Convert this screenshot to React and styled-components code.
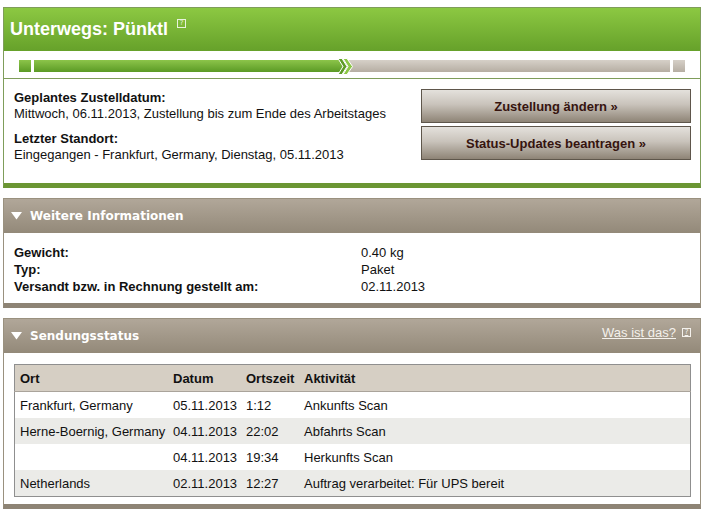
import React from "react";
import styled, { createGlobalStyle } from "styled-components";

const Global = createGlobalStyle`
  html, body { margin: 0; padding: 0; background: #fff; }
  body { font-family: "Liberation Sans", Arial, sans-serif; font-size: 13px; color: #111; }
`;

const Page = styled.div`
  width: 698px;
  padding: 7px 0 0 3px;
  display: flex;
  flex-direction: column;
  gap: 10px;
`;

const Panel = styled.section`
  border: 1px solid ${(p) => (p.$green ? "#7f9d5a" : "#9a917f")};
  border-bottom: 5px solid ${(p) => (p.$green ? "#6b9633" : "#8e8475")};
  background: #fff;
`;

const GreenHeader = styled.header`
  height: 43px;
  display: flex;
  align-items: center;
  padding-left: 6px;
  background: linear-gradient(#8cc842, #66a12a);
  color: #fff;
  font-weight: bold;
  font-size: 18px;
  gap: 9px;
`;

const HelpIcon = styled.span`
  display: inline-flex;
  align-items: center;
  justify-content: center;
  width: 7px;
  height: 7px;
  border: 1px solid ${(p) => p.$color || "#e8f2dc"};
  color: ${(p) => p.$color || "#e8f2dc"};
  font-size: 7px;
  line-height: 7px;
  font-weight: normal;
  font-family: "DejaVu Sans", sans-serif;
  align-self: ${(p) => (p.$top ? "flex-start" : "center")};
  margin-top: ${(p) => (p.$top ? "11px" : "0")};
`;

const ProgressStrip = styled.div`
  height: 18px;
  border-bottom: 1px solid #7f9d5a;
  display: flex;
  align-items: flex-start;
  padding: 9px 15px 0 15px;
  gap: 3px;
`;

const Block = styled.div`
  height: 12px;
  width: ${(p) => (p.$w ? p.$w + "px" : "auto")};
  flex: ${(p) => (p.$grow ? "1" : "none")};
  background: ${(p) =>
    p.$done
      ? "linear-gradient(#8cc44a, #5b9a25)"
      : "linear-gradient(#d6d0c8, #b6aea3)"};
`;

const Joined = styled.div`
  flex: 1;
  display: flex;
  align-items: center;
  position: relative;
`;

const Chevron = styled.svg`
  position: absolute;
  left: 303px;
  top: -2px;
`;

const Content = styled.div`
  display: flex;
  justify-content: space-between;
  padding: 10px 9px 20px 10px;
`;

const Info = styled.div`
  display: flex;
  flex-direction: column;
  gap: 9px;
  line-height: 16px;
  padding-top: 1px;
`;

const Label = styled.div`
  font-weight: bold;
  color: #111;
`;

const Buttons = styled.div`
  display: flex;
  flex-direction: column;
  gap: 3px;
`;

const Button = styled.button`
  width: 270px;
  height: 34px;
  border: 1px solid #5e564b;
  background: linear-gradient(#e4e1dc 0%, #c9c3bb 45%, #8e8476 100%);
  color: #36140f;
  font-family: "Liberation Sans", Arial, sans-serif;
  font-weight: bold;
  font-size: 13px;
  cursor: pointer;
  padding: 0;
`;

const BrownHeader = styled.header`
  height: 34px;
  display: flex;
  align-items: center;
  padding: 0 9px 0 7px;
  background: linear-gradient(#b1a799, #938979);
  color: #fff;
  font-family: "DejaVu Sans", Verdana, sans-serif;
  font-weight: bold;
  font-size: 12px;
  gap: 8px;
`;

const Title = styled.span`
  flex: 1;
`;

const HeadLink = styled.a`
  font-family: "Liberation Sans", Arial, sans-serif;
  font-weight: normal;
  font-size: 13px;
  color: #f4f1ec;
  text-decoration: underline;
  align-self: flex-start;
  margin-top: 6px;
  display: flex;
  align-items: center;
  gap: 6px;
`;

const DetailsGrid = styled.div`
  display: grid;
  grid-template-columns: 347px 1fr;
  padding: 11px 10px 8px 10px;
  line-height: 17px;
`;

const Value = styled.div`
  color: #111;
`;

const TableWrap = styled.div`
  padding: 11px 9px 7px 10px;
`;

const Table = styled.table`
  width: 100%;
  border-collapse: collapse;
  border: 1px solid #8f8f8f;
  font-size: 13px;
`;

const Th = styled.th`
  text-align: left;
  background: #d6cfc4;
  height: 26px;
  padding: 0 0 0 5px;
  font-weight: bold;
  color: #111;
  border-bottom: 1px solid #aaa49b;
  width: ${(p) => (p.$w ? p.$w + "px" : "auto")};
`;

const Tr = styled.tr`
  background: ${(p) => (p.$alt ? "#ebebe8" : "#fff")};
`;

const Td = styled.td`
  height: 26px;
  padding: 0 0 0 5px;
  white-space: nowrap;
  color: #111;
`;

const Triangle = () => (
  <svg width="11" height="8" viewBox="0 0 11 8">
    <polygon points="0,0 11,0 5.5,7.5" fill="#fff" />
  </svg>
);

const rows = [
  ["Frankfurt, Germany", "05.11.2013", "1:12", "Ankunfts Scan"],
  ["Herne-Boernig, Germany", "04.11.2013", "22:02", "Abfahrts Scan"],
  ["", "04.11.2013", "19:34", "Herkunfts Scan"],
  ["Netherlands", "02.11.2013", "12:27", "Auftrag verarbeitet: Für UPS bereit"],
];

export default function App() {
  return (
    <>
      <Global />
      <Page>
        <Panel $green>
          <GreenHeader>
            <span>Unterwegs: Pünktl</span>
            <HelpIcon $top>?</HelpIcon>
          </GreenHeader>
          <ProgressStrip>
            <Block $done $w={12} />
            <Joined>
              <Block $done $w={308} />
              <Block $grow />
              <Chevron width="17" height="17" viewBox="0 0 17 17">
                <polygon
                  points="1,0.5 5,0.5 10,8.5 5,16.5 1,16.5 6,8.5"
                  fill="#5e9c27"
                  stroke="#fff"
                  strokeWidth="1"
                  strokeLinejoin="round"
                />
                <polygon
                  points="6,0.5 10,0.5 15.5,8.5 10,16.5 6,16.5 11,8.5"
                  fill="#8cc746"
                  stroke="#fff"
                  strokeWidth="1"
                  strokeLinejoin="round"
                />
              </Chevron>
            </Joined>
            <Block $w={12} />
          </ProgressStrip>
          <Content>
            <Info>
              <div>
                <Label>Geplantes Zustelldatum:</Label>
                <div>Mittwoch, 06.11.2013, Zustellung bis zum Ende des Arbeitstages</div>
              </div>
              <div>
                <Label>Letzter Standort:</Label>
                <div>Eingegangen - Frankfurt, Germany, Dienstag, 05.11.2013</div>
              </div>
            </Info>
            <Buttons>
              <Button>Zustellung ändern »</Button>
              <Button>Status-Updates beantragen »</Button>
            </Buttons>
          </Content>
        </Panel>

        <Panel>
          <BrownHeader>
            <Triangle />
            <Title>Weitere Informationen</Title>
          </BrownHeader>
          <DetailsGrid>
            <Label>Gewicht:</Label>
            <Value>0.40 kg</Value>
            <Label>Typ:</Label>
            <Value>Paket</Value>
            <Label>Versandt bzw. in Rechnung gestellt am:</Label>
            <Value>02.11.2013</Value>
          </DetailsGrid>
        </Panel>

        <Panel>
          <BrownHeader>
            <Triangle />
            <Title>Sendungsstatus</Title>
            <HeadLink href="#">
              Was ist das? <HelpIcon $color="#f4f1ec">?</HelpIcon>
            </HeadLink>
          </BrownHeader>
          <TableWrap>
            <Table>
              <thead>
                <tr>
                  <Th $w={148}>Ort</Th>
                  <Th $w={68}>Datum</Th>
                  <Th $w={53}>Ortszeit</Th>
                  <Th>Aktivität</Th>
                </tr>
              </thead>
              <tbody>
                {rows.map((r, i) => (
                  <Tr key={i} $alt={i % 2 === 1}>
                    <Td>{r[0]}</Td>
                    <Td>{r[1]}</Td>
                    <Td>{r[2]}</Td>
                    <Td>{r[3]}</Td>
                  </Tr>
                ))}
              </tbody>
            </Table>
          </TableWrap>
        </Panel>
      </Page>
    </>
  );
}
